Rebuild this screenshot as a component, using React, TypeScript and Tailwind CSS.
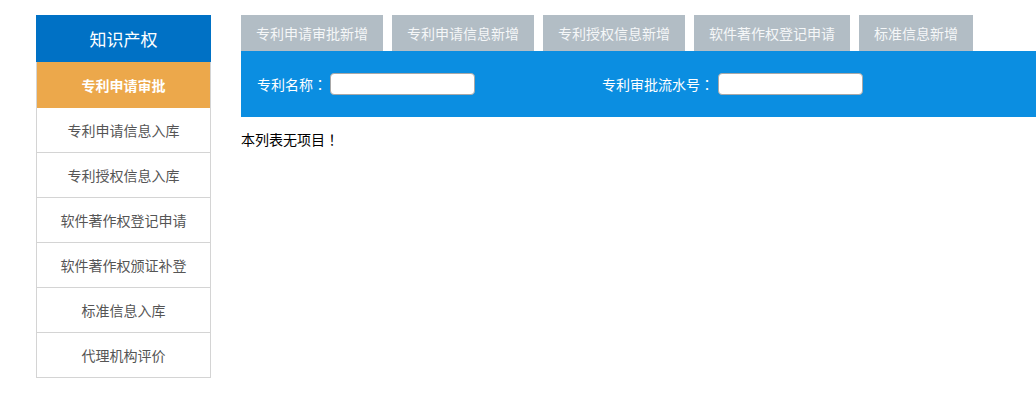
import React from "react";

const items = [
  "专利申请信息入库",
  "专利授权信息入库",
  "软件著作权登记申请",
  "软件著作权颁证补登",
  "标准信息入库",
  "代理机构评价",
];

const tabs = [
  "专利申请审批新增",
  "专利申请信息新增",
  "专利授权信息新增",
  "软件著作权登记申请",
  "标准信息新增",
];

function Punct({ c }: { c: string }) {
  return (
    <span
      className="inline-block w-[14px] text-center"
      style={{ fontFamily: '"Noto Sans CJK TC", "Noto Sans CJK SC", sans-serif' }}
    >
      {c}
    </span>
  );
}

export default function App() {
  return (
    <div
      lang="zh-CN"
      className="flex w-[1036px] h-[395px] bg-white pt-[15px] pl-[36px] overflow-hidden [text-spacing-trim:space-all]"
      style={{ fontFamily: '"Microsoft YaHei", "Noto Sans CJK SC", "Noto Sans", sans-serif' }}
    >
      <div className="w-[175px] shrink-0 flex flex-col">
        <div className="h-[47px] bg-[#0071c5] text-white text-[17px] flex items-center justify-center">
          知识产权
        </div>
        <div className="h-[46px] bg-[#eca84b] text-white text-[14px] font-bold flex items-center justify-center border-x border-[#d4d4d4]">
          专利申请审批
        </div>
        {items.map((t) => (
          <div
            key={t}
            className="h-[45px] border-x border-b border-[#d4d4d4] text-[14px] text-[#555555] flex items-center justify-center"
          >
            {t}
          </div>
        ))}
      </div>
      <div className="ml-[30px] flex-1 flex flex-col">
        <div className="flex gap-[9px] h-[36px]">
          {tabs.map((t) => (
            <div
              key={t}
              className="h-full px-[15px] bg-[#b2bdc5] text-[#f5f7f8] text-[14px] flex items-center"
            >
              {t}
            </div>
          ))}
        </div>
        <div className="h-[66px] bg-[#0b8ee1] flex items-center text-white text-[14px]">
          <span className="ml-[16px] flex items-center">
            专利名称<Punct c="：" />
          </span>
          <div className="ml-[3px] w-[145px] h-[22px] bg-white rounded-[4px] border border-[#a8a8a8]" />
          <span className="ml-[127px] flex items-center">
            专利审批流水号<Punct c="：" />
          </span>
          <div className="ml-[4px] w-[145px] h-[22px] bg-white rounded-[4px] border border-[#a8a8a8]" />
        </div>
        <div className="mt-[13px] text-[14px] text-black leading-[18px] flex">
          本列表无项目<Punct c="！" />
        </div>
      </div>
    </div>
  );
}
